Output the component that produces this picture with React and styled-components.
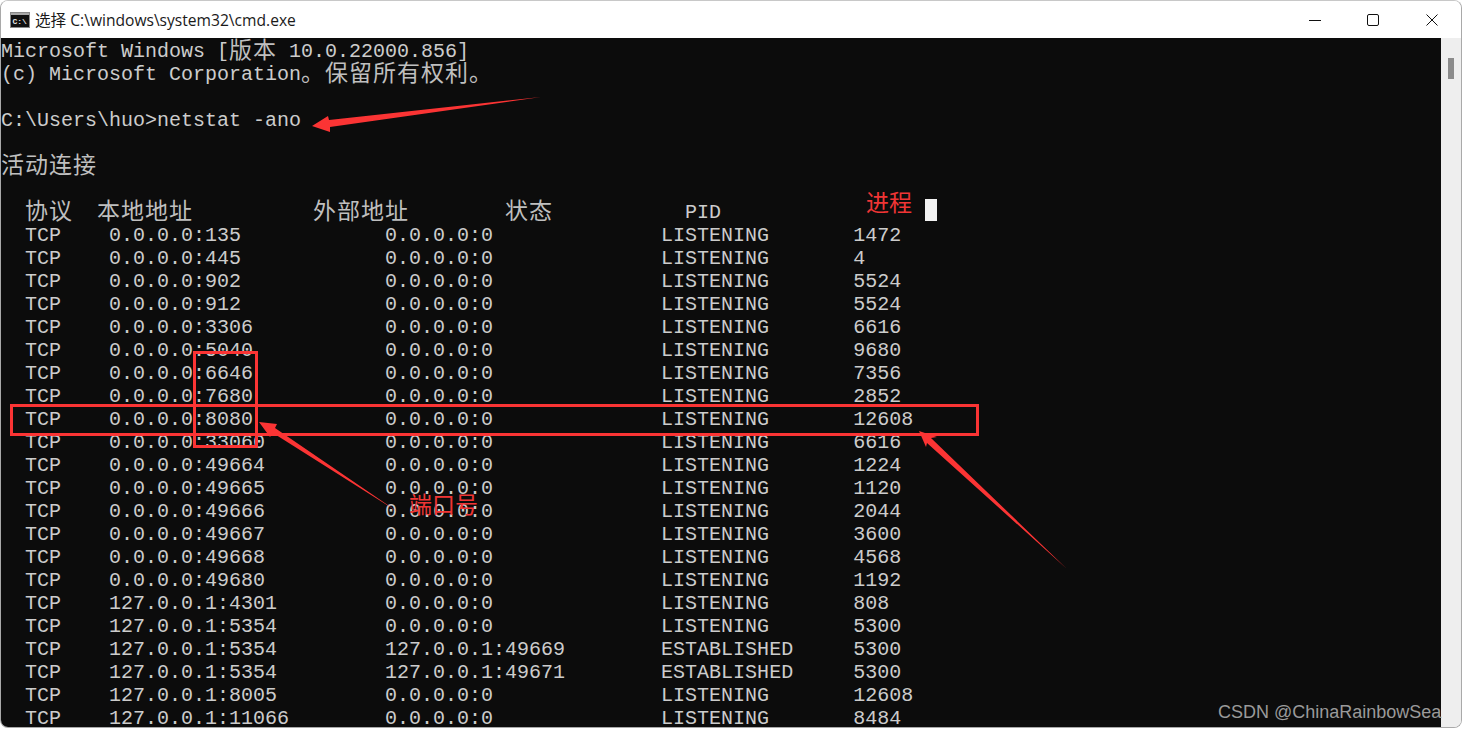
import React from "react";
import styled, { createGlobalStyle } from "styled-components";

const Global = createGlobalStyle`
  html, body { margin: 0; padding: 0; background: #ffffff; overflow: hidden; }
`;

const Window = styled.div`
  position: relative;
  box-sizing: border-box;
  width: 1462px;
  height: 728px;
  display: flex;
  flex-direction: column;
  overflow: hidden;
  background: #ffffff;
  border: 1px solid #a9a9a9;
  border-top-color: #c8c8c8;
  border-radius: 8px;
`;

const TitleBar = styled.header`
  flex: 0 0 37px;
  display: flex;
  align-items: center;
  padding-left: 9px;
  background: #ffffff;
`;

const TitleText = styled.span`
  margin-left: 5px;
  font: 15.6px/20px "Open Sans", "Noto Sans CJK SC", sans-serif;
  color: #1a1a1a;
  white-space: pre;
`;

const Controls = styled.div`
  margin-left: auto;
  display: flex;
`;

const ControlButton = styled.button`
  width: 58.5px;
  height: 37px;
  padding: 0;
  border: 0;
  background: transparent;
  display: flex;
  align-items: center;
  justify-content: center;
`;

const Body = styled.main`
  flex: 1;
  min-height: 0;
  display: flex;
`;

const Console = styled.div`
  flex: 1;
  min-width: 0;
  overflow: hidden;
  padding-top: 2px;
  background: #0c0c0c;
  color: #cccccc;
  font: 20px/23px "Liberation Mono", "Noto Sans CJK SC", monospace;
`;

const Line = styled.div`
  height: 23px;
  white-space: pre;
`;

const Cjk = styled.span`
  font-family: "Noto Sans CJK SC", sans-serif;
  font-size: 23px;
  font-weight: 400;
  letter-spacing: 1px;
  line-height: 0;
  vertical-align: -1px;
  color: #bfbfbf;
`;

const Cursor = styled.span`
  display: inline-block;
  width: 12px;
  height: 22px;
  margin-top: -8px;
  vertical-align: -3px;
  background: #f2f2f2;
`;

const ScrollTrack = styled.div`
  flex: 0 0 20px;
  background: #eeeeee;
  position: relative;
  display: flex;
  justify-content: center;
  padding-top: 20px;
`;

const ScrollThumb = styled.div`
  width: 6px;
  height: 21px;
  background: #8b8b8b;
`;

const Annotations = styled.svg`
  position: absolute;
  left: -1px;
  top: -1px;
  width: 1463px;
  height: 729px;
  pointer-events: none;
`;

const RedBox = styled.div`
  position: absolute;
  box-sizing: border-box;
  border: 3px solid #fb3434;
  left: ${(p) => p.$x - 1}px;
  top: ${(p) => p.$y - 1}px;
  width: ${(p) => p.$w}px;
  height: ${(p) => p.$h}px;
`;

const RedLabel = styled.span`
  position: absolute;
  left: ${(p) => p.$x - 1}px;
  top: ${(p) => p.$y - 1}px;
  font: 23px/28px "Noto Sans CJK SC", sans-serif;
  color: #f03535;
  white-space: pre;
`;

const Watermark = styled.span`
  position: absolute;
  left: 1217px;
  top: 700px;
  font: 18px/22px "Liberation Sans", sans-serif;
  color: #9a9a9a;
  white-space: pre;
`;

const CmdIcon = () => (
  <svg width="20" height="16" viewBox="0 0 20 16">
    <rect x="0.5" y="0.5" width="19" height="15" fill="#a8a8a8" stroke="#8a8a8a" />
    <rect x="1" y="3" width="18" height="12" fill="#111111" />
    <text x="2.5" y="12" fontSize="8" fontWeight="700" fontFamily="Liberation Mono, monospace" fill="#e8e8e8">C:\</text>
  </svg>
);

const MinIcon = () => (
  <svg width="14" height="14" viewBox="0 0 14 14">
    <path d="M1 7.5h12" stroke="#111" strokeWidth="1" />
  </svg>
);
const MaxIcon = () => (
  <svg width="14" height="14" viewBox="0 0 14 14">
    <rect x="1.5" y="1.5" width="11" height="11" rx="1.5" fill="none" stroke="#111" strokeWidth="1" />
  </svg>
);
const CloseIcon = () => (
  <svg width="14" height="14" viewBox="0 0 14 14">
    <path d="M1.5 1.5l11 11M12.5 1.5l-11 11" stroke="#111" strokeWidth="1" />
  </svg>
);

const row = (local, remote, state, pid) =>
  "  TCP    " + local.padEnd(23) + remote.padEnd(23) + state.padEnd(16) + pid;

const any = "0.0.0.0:0";
const rows = [
  ["0.0.0.0:135", any, "LISTENING", "1472"],
  ["0.0.0.0:445", any, "LISTENING", "4"],
  ["0.0.0.0:902", any, "LISTENING", "5524"],
  ["0.0.0.0:912", any, "LISTENING", "5524"],
  ["0.0.0.0:3306", any, "LISTENING", "6616"],
  ["0.0.0.0:5040", any, "LISTENING", "9680"],
  ["0.0.0.0:6646", any, "LISTENING", "7356"],
  ["0.0.0.0:7680", any, "LISTENING", "2852"],
  ["0.0.0.0:8080", any, "LISTENING", "12608"],
  ["0.0.0.0:33060", any, "LISTENING", "6616"],
  ["0.0.0.0:49664", any, "LISTENING", "1224"],
  ["0.0.0.0:49665", any, "LISTENING", "1120"],
  ["0.0.0.0:49666", any, "LISTENING", "2044"],
  ["0.0.0.0:49667", any, "LISTENING", "3600"],
  ["0.0.0.0:49668", any, "LISTENING", "4568"],
  ["0.0.0.0:49680", any, "LISTENING", "1192"],
  ["127.0.0.1:4301", any, "LISTENING", "808"],
  ["127.0.0.1:5354", any, "LISTENING", "5300"],
  ["127.0.0.1:5354", "127.0.0.1:49669", "ESTABLISHED", "5300"],
  ["127.0.0.1:5354", "127.0.0.1:49671", "ESTABLISHED", "5300"],
  ["127.0.0.1:8005", any, "LISTENING", "12608"],
  ["127.0.0.1:11066", any, "LISTENING", "8484"],
];

export default function App() {
  return (
    <>
      <Global />
      <Window>
        <TitleBar>
          <CmdIcon />
          <TitleText>选择 C:\windows\system32\cmd.exe</TitleText>
          <Controls>
            <ControlButton aria-label="minimize"><MinIcon /></ControlButton>
            <ControlButton aria-label="maximize"><MaxIcon /></ControlButton>
            <ControlButton aria-label="close"><CloseIcon /></ControlButton>
          </Controls>
        </TitleBar>
        <Body>
          <Console>
            <Line>Microsoft Windows [<Cjk>版本</Cjk> 10.0.22000.856]</Line>
            <Line>(c) Microsoft Corporation<Cjk>。保留所有权利。</Cjk></Line>
            <Line />
            <Line>{"C:\\Users\\huo>netstat -ano"}</Line>
            <Line />
            <Line><Cjk>活动连接</Cjk></Line>
            <Line />
            <Line>
              {"  "}<Cjk>协议</Cjk>{"  "}<Cjk>本地地址</Cjk>{"          "}<Cjk>外部地址</Cjk>{"        "}<Cjk>状态</Cjk>{"           PID                 "}<Cursor />
            </Line>
            {rows.map((r, i) => (
              <Line key={i}>{row(...r)}</Line>
            ))}
          </Console>
          <ScrollTrack>
            <ScrollThumb />
          </ScrollTrack>
        </Body>

        <RedBox $x={193} $y={351} $w={65} $h={97} />
        <RedBox $x={10} $y={404} $w={969} $h={32} />
        <Annotations viewBox="0 0 1463 729">
          <polygon fill="#fb3434" points="312,126 328,116 329,120 541,97 330,127 330,132" />
          <polygon fill="#fb3434" points="259,422 277,424 275,428 398,512 273,433 270,437" />
          <polygon fill="#fb3434" points="919,431 937,437 931,438 1067,569 927,443 926,447" />
        </Annotations>
        <RedLabel $x={409} $y={489}>端口号</RedLabel>
        <RedLabel $x={866} $y={187}>进程</RedLabel>
        <Watermark>CSDN @ChinaRainbowSea</Watermark>
      </Window>
    </>
  );
}
